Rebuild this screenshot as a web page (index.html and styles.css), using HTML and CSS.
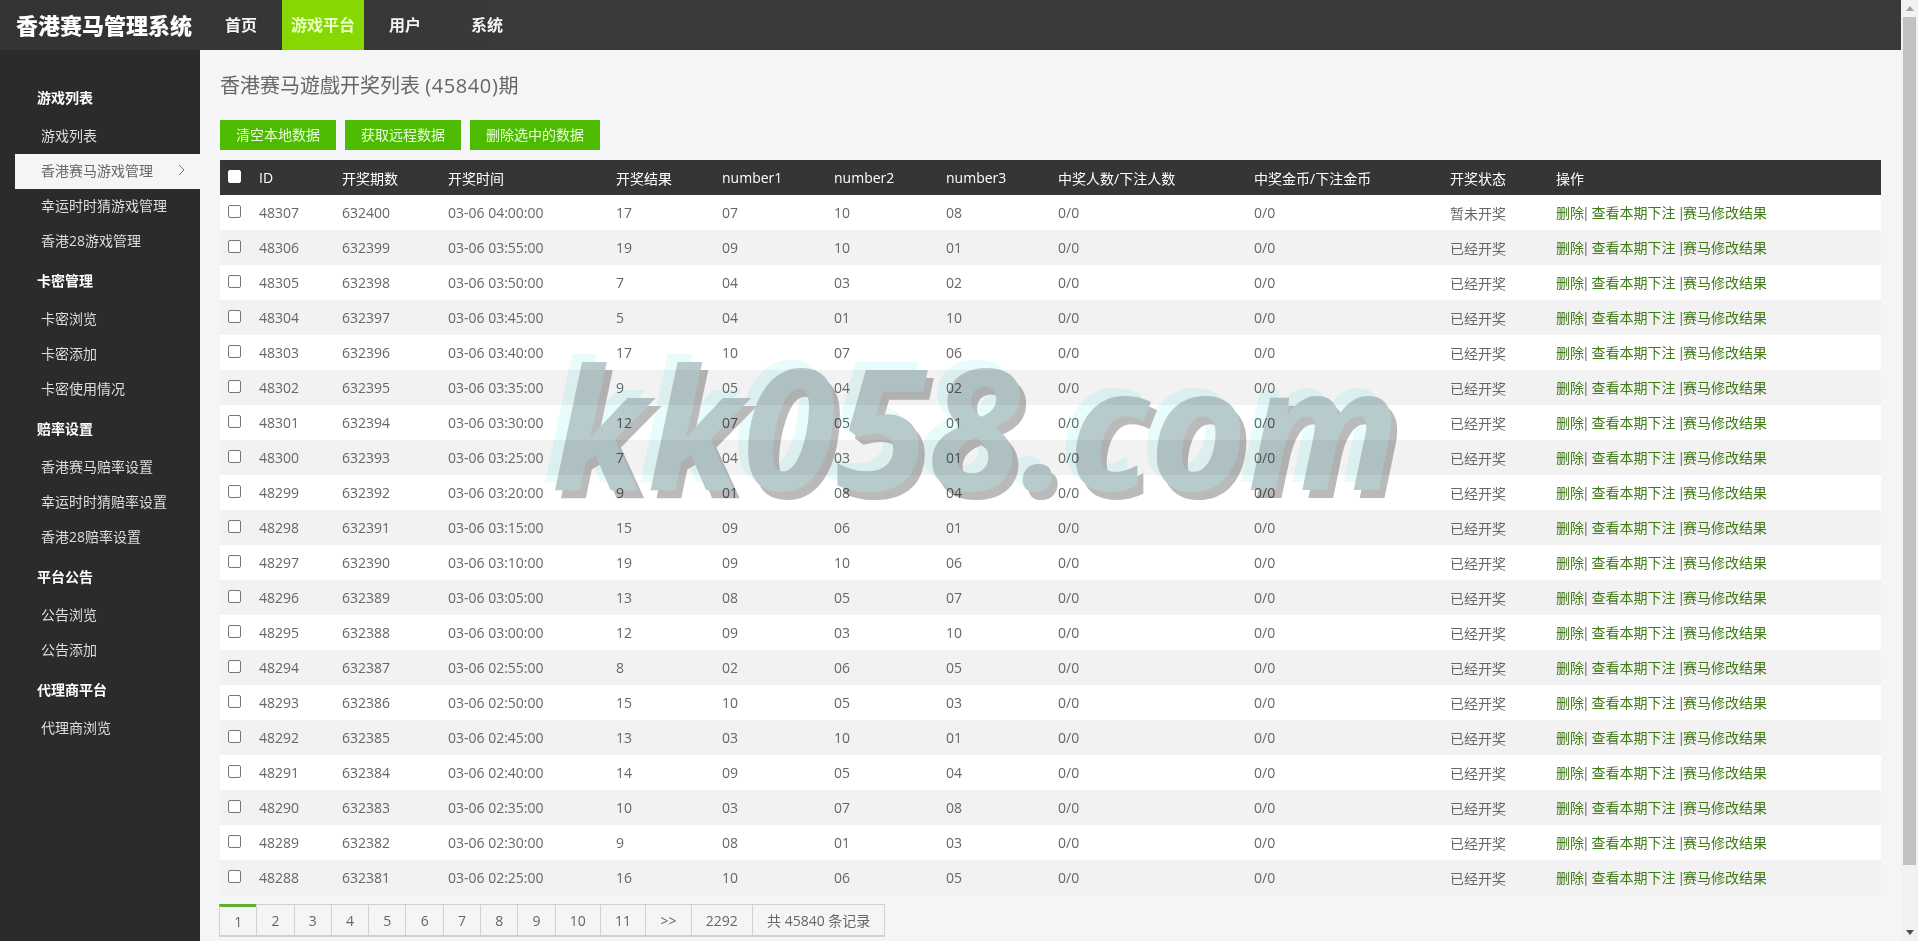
FILE: index.html
```html
<!DOCTYPE html>
<html lang="zh-CN">
<head>
    <meta charset="UTF-8">
    <title>香港赛马管理系统</title>
    <link rel="stylesheet" href="styles.css">
</head>
<body>
<div class="page">
    <div class="app">
        <div class="header">
            <div class="logo">香港赛马管理系统</div>
            <ul class="nav">
                <li><a href="#">首页</a></li>
                <li><a href="#" class="on">游戏平台</a></li>
                <li class="wide"><a href="#">用户</a></li>
                <li><a href="#">系统</a></li>
            </ul>
        </div>
        <div class="body">
            <div class="side">
                <h3>游戏列表</h3>
                <a href="#">游戏列表</a>
                <a href="#" class="on">香港赛马游戏管理<svg class="arrow" viewBox="0 0 7 12" width="7" height="12"><path d="M1 1l5 5-5 5" fill="none" stroke="#777" stroke-width="1"/></svg></a>
                <a href="#">幸运时时猜游戏管理</a>
                <a href="#">香港28游戏管理</a>
                <h3>卡密管理</h3>
                <a href="#">卡密浏览</a>
                <a href="#">卡密添加</a>
                <a href="#">卡密使用情况</a>
                <h3>赔率设置</h3>
                <a href="#">香港赛马赔率设置</a>
                <a href="#">幸运时时猜赔率设置</a>
                <a href="#">香港28赔率设置</a>
                <h3>平台公告</h3>
                <a href="#">公告浏览</a>
                <a href="#">公告添加</a>
                <h3>代理商平台</h3>
                <a href="#">代理商浏览</a>
            </div>
            <div class="main">
                <h2 class="title">香港赛马遊戲开奖列表 <span class="count">(45840)</span>期</h2>
                <div class="btns">
                    <a href="#" class="btn">清空本地数据</a>
                    <a href="#" class="btn">获取远程数据</a>
                    <a href="#" class="btn">删除选中的数据</a>
                </div>
                <table class="list">
                    <colgroup>
                        <col class="c-check"><col class="c-id"><col class="c-no"><col class="c-time"><col class="c-res">
                        <col class="c-n1"><col class="c-n2"><col class="c-n3"><col class="c-win"><col class="c-coin">
                        <col class="c-state"><col>
                    </colgroup>
                    <thead>
                        <tr>
                            <th><span class="check checked"></span></th>
                            <th>ID</th><th>开奖期数</th><th>开奖时间</th><th>开奖结果</th>
                            <th>number1</th><th>number2</th><th>number3</th>
                            <th>中奖人数/下注人数</th><th>中奖金币/下注金币</th><th>开奖状态</th><th>操作</th>
                        </tr>
                    </thead>
                    <tbody id="rows"></tbody>
                </table>
                <div class="pager">
                    <a href="#" class="cur">1</a><a href="#">2</a><a href="#">3</a><a href="#">4</a><a href="#">5</a><a href="#">6</a><a href="#">7</a><a href="#">8</a><a href="#">9</a><a href="#">10</a><a href="#">11</a><a href="#">&gt;&gt;</a><a href="#">2292</a><a href="#">共 45840 条记录</a>
                </div>
            </div>
        </div>
    </div>
    <div class="scrollbar">
        <span class="up"></span>
        <span class="thumb"></span>
        <span class="down"></span>
    </div>
</div>
<div class="mark">kk058.com</div>
<script>
    var data = [
        [48307, 632400, '04:00:00', 17, '07', '10', '08'],
        [48306, 632399, '03:55:00', 19, '09', '10', '01'],
        [48305, 632398, '03:50:00', 7, '04', '03', '02'],
        [48304, 632397, '03:45:00', 5, '04', '01', '10'],
        [48303, 632396, '03:40:00', 17, '10', '07', '06'],
        [48302, 632395, '03:35:00', 9, '05', '04', '02'],
        [48301, 632394, '03:30:00', 12, '07', '05', '01'],
        [48300, 632393, '03:25:00', 7, '04', '03', '01'],
        [48299, 632392, '03:20:00', 9, '01', '08', '04'],
        [48298, 632391, '03:15:00', 15, '09', '06', '01'],
        [48297, 632390, '03:10:00', 19, '09', '10', '06'],
        [48296, 632389, '03:05:00', 13, '08', '05', '07'],
        [48295, 632388, '03:00:00', 12, '09', '03', '10'],
        [48294, 632387, '02:55:00', 8, '02', '06', '05'],
        [48293, 632386, '02:50:00', 15, '10', '05', '03'],
        [48292, 632385, '02:45:00', 13, '03', '10', '01'],
        [48291, 632384, '02:40:00', 14, '09', '05', '04'],
        [48290, 632383, '02:35:00', 10, '03', '07', '08'],
        [48289, 632382, '02:30:00', 9, '08', '01', '03'],
        [48288, 632381, '02:25:00', 16, '10', '06', '05']
    ];

    var html = '';
    data.forEach(function (r, i) {
        html += '<tr>' +
            '<td><span class="check"></span></td>' +
            '<td>' + r[0] + '</td><td>' + r[1] + '</td><td>03-06 ' + r[2] + '</td><td>' + r[3] + '</td>' +
            '<td>' + r[4] + '</td><td>' + r[5] + '</td><td>' + r[6] + '</td>' +
            '<td>0/0</td><td>0/0</td>' +
            '<td>' + (i === 0 ? '暂未开奖' : '已经开奖') + '</td>' +
            '<td class="ops"><a href="#">删除</a>| <a href="#">查看本期下注</a> |<a href="#">赛马修改结果</a></td>' +
            '</tr>';
    });
    document.getElementById('rows').innerHTML = html;
</script>
</body>
</html>
```

FILE: styles.css
```css
* {
    box-sizing: border-box;
}
html, body {
    margin: 0;
    padding: 0;
    height: 100%;
    overflow: hidden;
}
body {
    font-family: "Open Sans", "Noto Sans CJK SC", sans-serif;
    font-size: 14px;
    color: #666;
    background-color: #f5f5f7;
}
a {
    color: inherit;
    text-decoration: none;
}
.page {
    display: flex;
    height: 941px;
}
.app {
    flex: 1;
    min-width: 0;
    display: flex;
    flex-direction: column;
}

/* header */
.header {
    display: flex;
    height: 50px;
    flex: none;
    background: linear-gradient(90deg, #333 0, #3a3a3a 30%, #3a3a3a 100%);
}
.logo {
    width: 216px;
    padding-left: 16px;
    line-height: 50px;
    font-size: 22px;
    font-weight: 900;
    color: #fff;
    white-space: nowrap;
}
.nav {
    display: flex;
    gap: 16px;
    list-style: none;
    margin: 0;
    padding: 0;
}
.nav .wide {
    margin-right: 16px;
}
.nav a {
    display: block;
    padding: 0 9px;
    line-height: 50px;
    font-size: 16px;
    font-weight: 700;
    color: #f4f4f4;
}
.nav a.on {
    background-color: #86d802;
    color: #eaffc8;
}

/* sidebar */
.body {
    flex: 1;
    display: flex;
    min-height: 0;
}
.side {
    width: 200px;
    flex: none;
    padding: 26px 0 0 15px;
    background-color: #2b2b2b;
}
.side h3 {
    margin: 0;
    padding-left: 22px;
    height: 43px;
    line-height: 44px;
    font-size: 14px;
    font-weight: 700;
    color: #fff;
}
.side a {
    display: flex;
    align-items: center;
    justify-content: space-between;
    height: 35px;
    padding: 0 15px 3px 26px;
    color: #ddd;
}
.side a.on {
    background-color: #f5f5f7;
    color: #666;
}

/* content */
.main {
    flex: 1;
    min-width: 0;
    padding: 0 20px;
}
.title {
    margin: 0;
    padding-top: 21px;
    height: 70px;
    line-height: 30px;
    font-size: 20px;
    font-weight: 400;
    color: #666;
}
.count {
    letter-spacing: 0.6px;
}
.btns {
    display: flex;
    gap: 9px;
    height: 40px;
}
.btn {
    height: 30px;
    padding: 0 16px;
    line-height: 30px;
    background-color: #4cbb02;
    color: #e8ffd6;
}
.list {
    width: 100%;
    table-layout: fixed;
    border-collapse: collapse;
}
.c-check { width: 38px; }
.c-id { width: 83px; }
.c-no { width: 106px; }
.c-time { width: 168px; }
.c-res { width: 106px; }
.c-n1 { width: 112px; }
.c-n2 { width: 112px; }
.c-n3 { width: 112px; }
.c-win { width: 196px; }
.c-coin { width: 196px; }
.c-state { width: 106px; }
.list th,
.list td {
    height: 35px;
    padding: 0 0 0 1px;
    text-align: left;
    font-weight: 400;
    white-space: nowrap;
}
.list th {
    background-color: #353535;
    color: #fff;
}
.list tbody tr {
    background-color: #fff;
}
.list tbody tr:nth-child(even) {
    background-color: #f2f2f2;
}
.list td.ops {
    padding-bottom: 2px;
    font-family: "Liberation Sans", "Noto Sans CJK SC", sans-serif;
    color: #777;
}
.ops a {
    color: #3f7a17;
}
.list th:first-child,
.list td:first-child {
    padding-left: 8px;
}
.check {
    display: block;
    width: 13px;
    height: 13px;
    margin-top: -2px;
    border: 1px solid #767676;
    border-radius: 2px;
    background-color: #fff;
}
.check.checked {
    border-color: #fff;
}

/* pager */
.pager {
    display: flex;
    margin-top: 9px;
}
.pager a {
    height: 33px;
    padding: 0 14.15px;
    margin-left: -1px;
    line-height: 31px;
    border: 1px solid #d2d2d2;
    border-bottom-width: 2px;
    color: #666;
}
.pager .cur {
    border-top: 3px solid #5fb030;
    line-height: 29px;
}

/* fake browser scrollbar */
.scrollbar {
    display: flex;
    flex-direction: column;
    justify-content: space-between;
    width: 17px;
    flex: none;
    padding: 0 2px 0 2px;
    background-color: #f1f1f1;
}
.scrollbar .up,
.scrollbar .down {
    display: block;
    width: 0;
    margin: 6px auto;
    border: 4px solid transparent;
}
.scrollbar .up {
    border-top: 0;
    border-bottom: 5px solid #a3a3a3;
}
.scrollbar .down {
    border-bottom: 0;
    border-top: 5px solid #505050;
}
.scrollbar .thumb {
    display: block;
    height: 848px;
    margin-bottom: 59px;
    background-color: #c1c1c1;
}

/* watermark sits over the page, text still reads through it */
.mark {
    position: absolute;
    left: 552px;
    top: 316px;
    font-family: "Open Sans", sans-serif;
    font-size: 168px;
    line-height: 1.3;
    font-style: italic;
    font-weight: 700;
    white-space: nowrap;
    pointer-events: none;
    mix-blend-mode: multiply;
    color: #b8cbcc;
    text-shadow: 6px 8px 0 #bababa, -10px -8px 0 #e8fcfc;
}
```
